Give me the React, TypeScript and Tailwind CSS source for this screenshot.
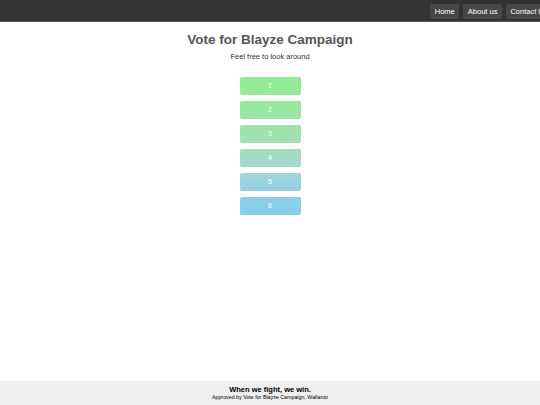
import React from "react";

const colors = [
  ["#93ec95", "#98e99c"],
  ["#98e99c", "#9de4a6"],
  ["#9fe3aa", "#a3dfb5"],
  ["#a5ddbe", "#a3d8cf"],
  ["#a1d6d8", "#92cfe6"],
  ["#8fcfe8", "#88cdea"],
];

export default function App() {
  return (
    <div className="flex h-[405px] w-[540px] flex-col overflow-hidden bg-white" style={{ fontFamily: '"Liberation Sans", Arial, sans-serif' }}>
      <header className="flex h-[22px] shrink-0 items-start justify-end bg-[#333333] pt-[4px] border-b border-[#555]">
        <div className="flex gap-[4px] mr-[-12px]">
          <span className="flex h-[15px] items-center rounded-[2px] bg-[#474747] px-[4.5px] text-[7.5px] text-white">Home</span>
          <span className="flex h-[15px] items-center rounded-[2px] bg-[#474747] px-[4.5px] text-[7.5px] text-white">About us</span>
          <span className="flex h-[15px] items-center whitespace-nowrap rounded-[2px] bg-[#474747] px-[4.5px] text-[7.5px] text-white">Contact Us</span>
        </div>
      </header>
      <main className="flex flex-1 flex-col items-center">
        <h1 className="mt-[10px] text-[13.5px] font-bold leading-[16px] text-[#555555]">Vote for Blayze Campaign</h1>
        <p className="mt-[4px] text-[7.5px] leading-[10px] text-[#333333]">Feel free to look around</p>
        <div className="mt-[15px] flex flex-col gap-[6px]">
          {colors.map((c, i) => (
            <div
              key={i}
              className="flex h-[18px] w-[61px] items-center justify-center rounded-[2px] text-[7px] text-white"
              style={{ background: `linear-gradient(to bottom, ${c[0]}, ${c[1]})` }}
            >
              {i + 1}
            </div>
          ))}
        </div>
      </main>
      <footer className="flex h-[24px] shrink-0 flex-col items-center justify-center bg-[#efefef]">
        <div className="text-[7.5px] font-bold leading-[9px] text-black">When we fight, we win.</div>
        <div className="text-[5.3px] leading-[7px] text-black">Approved by Vote for Blayze Campaign, Wallaroo</div>
      </footer>
    </div>
  );
}
